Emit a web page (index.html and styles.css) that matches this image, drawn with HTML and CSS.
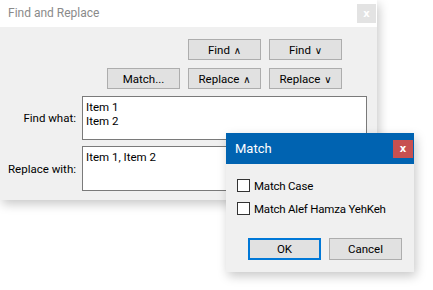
FILE: index.html
```html
<!DOCTYPE html>
<html lang="en">
<head>
  <meta charset="UTF-8">
  <title>Find and Replace</title>
  <link rel="stylesheet" href="styles.css">
</head>
<body>
  <!-- main window -->
  <div class="window find-window">
    <div class="titlebar">
      <span class="title">Find and Replace</span>
      <span class="close close-inactive">x</span>
    </div>
    <div class="find-body">
      <div class="btn-row">
        <button class="btn" type="button">Find <span class="arrow">&#x2227;</span></button>
        <button class="btn" type="button">Find <span class="arrow">&#x2228;</span></button>
      </div>
      <div class="btn-row">
        <button class="btn" type="button">Match...</button>
        <button class="btn" type="button">Replace <span class="arrow">&#x2227;</span></button>
        <button class="btn" type="button">Replace <span class="arrow">&#x2228;</span></button>
      </div>
      <div class="fields">
        <label class="field-label">Find what:</label>
        <div class="textbox">Item 1<br>Item 2</div>
        <label class="field-label">Replace with:</label>
        <div class="textbox tall">Item 1, Item 2</div>
      </div>
    </div>
  </div>

  <!-- match dialog -->
  <div class="window match-window">
    <div class="titlebar active">
      <span class="title">Match</span>
      <span class="close close-active">x</span>
    </div>
    <div class="match-body">
      <div class="checks">
        <div class="check"><span class="box"></span>Match Case</div>
        <div class="check"><span class="box"></span>Match Alef Hamza YehKeh</div>
      </div>
      <div class="dialog-buttons">
        <button class="btn default" type="button">OK</button>
        <button class="btn" type="button">Cancel</button>
      </div>
    </div>
  </div>
</body>
</html>
```
FILE: styles.css
```css
body {
  margin: 0;
  background-color: #ffffff;
  font-family: Roboto, "Noto Sans", sans-serif;
  font-size: 11.5px;
  color: #000;
  width: 433px;
  height: 290px;
  position: relative;
  overflow: hidden;
}
.window {
  position: absolute;
  background-color: #f0f0f0;
  box-shadow: 2px 4px 10px rgba(0, 0, 0, 0.22);
  display: flex;
  flex-direction: column;
}
.find-window {
  left: 0;
  top: 0;
  width: 377px;
  height: 200px;
}
.match-window {
  left: 226px;
  top: 133px;
  width: 188px;
  height: 139px;
}
.titlebar {
  height: 27px;
  background-color: #ffffff;
  display: flex;
  align-items: center;
  justify-content: space-between;
  padding: 0 1px 0 8px;
}
.titlebar .title {
  color: #8a8a8a;
  font-size: 12px;
  margin-top: -2px;
}
.titlebar.active {
  height: 31px;
  background-color: #0063b1;
  padding-left: 9px;
}
.titlebar.active .title {
  color: #ffffff;
  font-size: 13px;
  margin-top: -1px;
}
.close {
  display: flex;
  align-items: center;
  justify-content: center;
  color: #ffffff;
  font-family: "DejaVu Sans", sans-serif;
  font-size: 10px;
  font-weight: bold;
}
.close-inactive {
  width: 19px;
  height: 19px;
  background-color: #e3e3e3;
}
.close-active {
  width: 20px;
  height: 18px;
  background-color: #c75050;
}
.find-body {
  flex: 1;
  display: flex;
  flex-direction: column;
  padding: 12px 10px 0 0;
}
.btn-row {
  display: flex;
  justify-content: flex-end;
  gap: 8px;
  margin-right: 25px;
  margin-bottom: 8px;
}
.btn {
  width: 73px;
  height: 21px;
  padding: 0;
  border: 1px solid #adadad;
  background-color: #e1e1e1;
  font-family: Roboto, "Noto Sans", sans-serif;
  font-size: 11.5px;
  color: #000;
  box-sizing: border-box;
}
.arrow {
  font-family: "DejaVu Sans", sans-serif;
  font-size: 10px;
  margin-left: 1px;
}
.fields {
  display: grid;
  grid-template-columns: 76px 1fr;
  column-gap: 6px;
  row-gap: 6px;
  margin-top: -1px;
}
.field-label {
  text-align: right;
  align-self: center;
}
.textbox {
  height: 44px;
  box-sizing: border-box;
  border: 1px solid #7a7a7a;
  background-color: #ffffff;
  padding: 3px 3px;
  line-height: 14px;
}
.textbox.tall {
  height: 45px;
}
.match-body {
  flex: 1;
  display: flex;
  flex-direction: column;
  justify-content: space-between;
  padding: 14px 12px 12px 11px;
}
.checks {
  display: flex;
  flex-direction: column;
  gap: 8px;
}
.check {
  display: flex;
  align-items: center;
  gap: 4px;
  height: 15px;
  letter-spacing: -0.2px;
}
.box {
  width: 13px;
  height: 13px;
  box-sizing: border-box;
  border: 1px solid #333333;
  background-color: #ffffff;
}
.dialog-buttons {
  display: flex;
  justify-content: flex-end;
  gap: 8px;
}
.dialog-buttons .btn {
  width: 73px;
  height: 22px;
}
.btn.default {
  border: 2px solid #0078d7;
}
```
